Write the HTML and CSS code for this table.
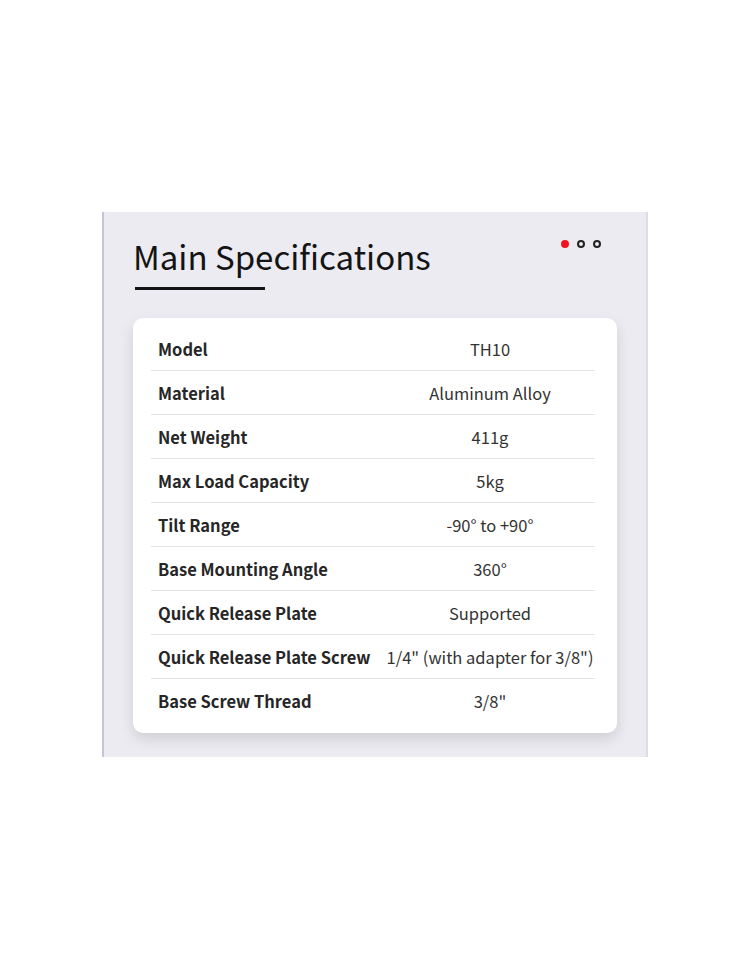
FILE: index.html
```html
<!DOCTYPE html>
<html lang="en">
<head>
    <meta charset="UTF-8">
    <meta name="viewport" content="width=device-width, initial-scale=1.0">
    <title>Main Specifications</title>
    <link rel="stylesheet" href="styles.css">
</head>
<body>
<div class="panel">
    <div class="head">
        <h1 class="title">Main Specifications</h1>
        <div class="dots">
            <span class="dot on"></span>
            <span class="dot"></span>
            <span class="dot"></span>
        </div>
    </div>
    <div class="bar"></div>

    <div class="card">
        <div class="row"><span class="key">Model</span><span class="val">TH10</span></div>
        <div class="row"><span class="key">Material</span><span class="val">Aluminum Alloy</span></div>
        <div class="row"><span class="key">Net Weight</span><span class="val">411g</span></div>
        <div class="row"><span class="key">Max Load Capacity</span><span class="val">5kg</span></div>
        <div class="row"><span class="key">Tilt Range</span><span class="val">-90° to +90°</span></div>
        <div class="row"><span class="key">Base Mounting Angle</span><span class="val">360°</span></div>
        <div class="row"><span class="key">Quick Release Plate</span><span class="val">Supported</span></div>
        <div class="row"><span class="key">Quick Release Plate Screw</span><span class="val">1/4" (with adapter for 3/8")</span></div>
        <div class="row"><span class="key">Base Screw Thread</span><span class="val">3/8"</span></div>
    </div>
</div>
</body>
</html>
```

FILE: styles.css
```css
* {
    margin: 0;
    padding: 0;
    box-sizing: border-box;
}

html {
    background: #ffffff;
}

body {
    margin: 0;
    padding-top: 212px;
    font-family: "Noto Sans CJK SC", "Noto Sans", sans-serif;
    color: #1a1a1a;
}

.panel {
    width: 546px;
    margin-left: 102px;
    padding: 24px 29px 24px 29px;
    background: #ebebf1;
    border-left: 2px solid #c3c5d6;
    border-right: 2px solid #dcdde6;
}

.head {
    display: flex;
    justify-content: space-between;
    align-items: flex-start;
}

.title {
    font-size: 33px;
    font-weight: 400;
    line-height: 40px;
    color: #141414;
}

.dots {
    display: flex;
    gap: 8px;
    margin-top: 4px;
    margin-right: 16px;
}

.dot {
    width: 8px;
    height: 8px;
    border-radius: 50%;
    border: 2px solid #222;
}

.dot.on {
    background: #f0141e;
    border-color: #f0141e;
}

.bar {
    width: 130px;
    height: 3px;
    margin: 11px 0 0 2px;
    background: #141414;
}

.card {
    margin-top: 28px;
    padding: 9px 22px 10px 18px;
    background: #ffffff;
    border-radius: 10px;
    box-shadow: 0 6px 14px rgba(0, 0, 0, 0.12);
}

.row {
    display: flex;
    align-items: center;
    height: 44px;
    border-bottom: 1px solid #e3e3e7;
    font-size: 16.5px;
}

.row:last-child {
    border-bottom: none;
}

.key {
    width: 234px;
    padding-left: 7px;
    font-weight: 700;
    color: #262626;
    white-space: nowrap;
}

.val {
    flex: 1;
    text-align: center;
    color: #333;
    white-space: nowrap;
}
```
